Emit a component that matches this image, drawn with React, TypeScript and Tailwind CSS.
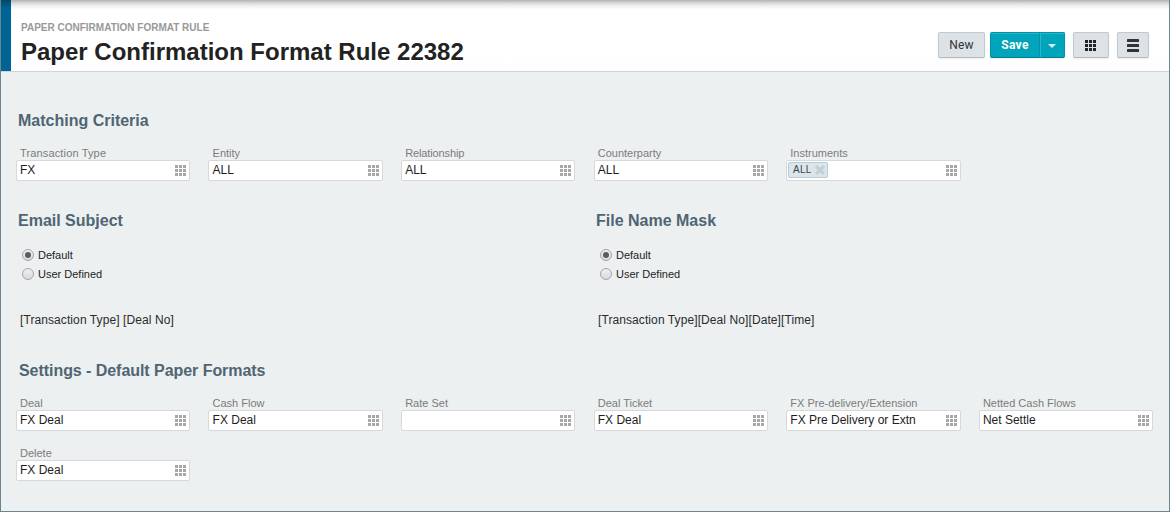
import React from "react";

function GridIcon({ className }: { className: string }) {
  return (
    <svg className={className} width="11" height="11" viewBox="0 0 11 11" fill="currentColor" shapeRendering="crispEdges">
      {[0, 4, 8].map((y) =>
        [0, 4, 8].map((x) => <rect key={`${x}-${y}`} x={x} y={y} width="3" height="3" />)
      )}
    </svg>
  );
}

function Heading({ children, className = "" }: { children: React.ReactNode; className?: string }) {
  return (
    <h2 className={`h-5 whitespace-nowrap text-[16px] leading-[22px] font-bold text-[#4f6573] ${className}`}>{children}</h2>
  );
}

function Field({ label, value, tag, labelClass = "" }: { label: string; value?: string; tag?: string; labelClass?: string }) {
  return (
    <div className="w-[174.4px]">
      <div className={`h-[13px] pl-[4.2px] text-[11px] leading-[13px] whitespace-nowrap text-[#7b7b7b] ${labelClass}`}>{label}</div>
      <div className="flex h-[21px] items-center justify-between rounded-[2px] border border-[#d6d8d9] bg-white pr-[3px]">
        {tag ? (
          <span className="mb-px ml-px flex h-4 w-10 items-center justify-between rounded-[2px] border border-[#b4cdd9] bg-[#dbe6ec] pr-[2px] pl-1 text-[10px] tracking-[0.2px] text-[#444]">
            <span className="leading-[12px]">{tag}</span>
            <svg width="10" height="10" viewBox="0 0 10 10" stroke="#c3cfd6" strokeWidth="3.2">
              <path d="M1 1 9 9M9 1 1 9" />
            </svg>
          </span>
        ) : (
          <span className="mb-px pl-[3.2px] text-[12px] leading-[18px] whitespace-nowrap text-[#1d1d1d]">{value}</span>
        )}
        <GridIcon className="mb-px shrink-0 text-[#a7a7a7]" />
      </div>
    </div>
  );
}

function Radio({ label, checked }: { label: string; checked?: boolean }) {
  return (
    <label className="flex h-[19px] items-center gap-1 text-[11px] leading-[19px] text-[#1d1d1d]">
      <span className="flex size-3 items-center justify-center rounded-full border border-[#a5a5a5] bg-linear-to-b from-[#f0f0f0] to-[#dadada]">
        {checked && <span className="size-1.5 rounded-full bg-[#5c5c5c]" />}
      </span>
      <span className="pt-px leading-[18px]">{label}</span>
    </label>
  );
}

function TextRule({ title, value }: { title: string; value: string }) {
  return (
    <section className="w-[578px] shrink-0">
      <Heading>{title}</Heading>
      <div className="mt-[15px] pl-1">
        <Radio label="Default" checked />
        <Radio label="User Defined" />
      </div>
      <p className="mt-[28px] pl-[2px] text-[12px] leading-[18px] tracking-[0.09px] whitespace-nowrap text-[#2b2b2b]">{value}</p>
    </section>
  );
}

const button =
  "flex h-[26px] items-center justify-center rounded-[2px] border border-[#c2c9ce] border-b-[#b3babf] bg-[#dce2e6] text-[#333] shadow-[0_1px_2px_rgba(0,0,0,0.08)]";

export default function App() {
  return (
    <div className="flex h-[512px] w-[1170px] flex-col overflow-hidden border-x border-b border-[#6f838e] bg-[#ecf0f1] font-['Liberation_Sans',Arial,sans-serif]">
      <header className="flex h-[72px] shrink-0 border-b border-[#cfd5d8] bg-[linear-gradient(to_bottom,#b3b3b3_0px,#bdbdbd_1px,#d8d8d8_3px,#f0f0f0_6px,#fff_10px,#fff_60px,#fcfcfc_71px)]">
        <div className="w-[10px] bg-[linear-gradient(to_bottom,#004668_0px,#00547b_3px,#006496_9px)]" />
        <div className="flex-1 pt-[21px] pl-[10px]">
          <p className="h-[14px] text-[10px] leading-[14px] font-bold text-[#999]">PAPER CONFIRMATION FORMAT RULE</p>
          <h1 className="mt-[3px] text-[24px] leading-7 font-bold text-[#222]">Paper Confirmation Format Rule 22382</h1>
        </div>
        <div className="mt-8 mr-5 flex h-[26px]">
          <button className={`${button} w-[47px] font-['Roboto',sans-serif] text-[12px] tracking-[0.2px]`}>New</button>
          <div className="ml-[5px] flex h-[26px] w-[75px] rounded-[2px] border border-[#0092a6] border-b-[#007f91] bg-[#00a5bb] text-white shadow-[inset_0_1px_0_#2bb6c8,0_1px_2px_rgba(0,0,0,0.08)]">
            <button className="w-[49px] border-r border-[#0092a6] font-['Roboto',sans-serif] text-[12px] font-bold tracking-[0.3px]">Save</button>
            <button className="flex flex-1 items-center justify-center border-l border-[#2bb6c8]">
              <svg width="8" height="4" viewBox="0 0 8 4" fill="#d5f1f5" className="mt-[2px] mr-px">
                <path d="M0 0H8L4 4Z" />
              </svg>
            </button>
          </div>
          <button className={`${button} ml-2 w-9`}>
            <GridIcon className="mr-px text-[#222]" />
          </button>
          <button className={`${button} ml-2 w-8`}>
            <svg width="12" height="13" viewBox="0 0 12 13" fill="#333">
              <rect width="12" height="3" rx="0.6" />
              <rect y="5" width="12" height="3" rx="0.6" />
              <rect y="10" width="12" height="3" rx="0.6" />
            </svg>
          </button>
        </div>
      </header>

      <main className="pt-[38px] pl-[14.8px]">
        <section>
          <Heading className="pl-[2.2px]">Matching Criteria</Heading>
          <div className="mt-[17px] flex gap-[18.2px]">
            <Field label="Transaction Type" value="FX" labelClass="tracking-[0.15px]" />
            <Field label="Entity" value="ALL" />
            <Field label="Relationship" value="ALL" labelClass="tracking-[-0.12px]" />
            <Field label="Counterparty" value="ALL" />
            <Field label="Instruments" tag="ALL" />
          </div>
        </section>

        <div className="mt-[29px] flex pl-[2.2px]">
          <TextRule title="Email Subject" value="[Transaction Type] [Deal No]" />
          <TextRule title="File Name Mask" value="[Transaction Type][Deal No][Date][Time]" />
        </div>

        <section className="mt-[31px]">
          <Heading className="pl-[3.2px] tracking-[-0.05px]">Settings - Default Paper Formats</Heading>
          <div className="mt-[17px] flex flex-wrap gap-x-[18.2px] gap-y-4">
            <Field label="Deal" value="FX Deal" />
            <Field label="Cash Flow" value="FX Deal" />
            <Field label="Rate Set" value="" />
            <Field label="Deal Ticket" value="FX Deal" />
            <Field label="FX Pre-delivery/Extension" value="FX Pre Delivery or Extn" />
            <Field label="Netted Cash Flows" value="Net Settle" />
            <Field label="Delete" value="FX Deal" />
          </div>
        </section>
      </main>
    </div>
  );
}
